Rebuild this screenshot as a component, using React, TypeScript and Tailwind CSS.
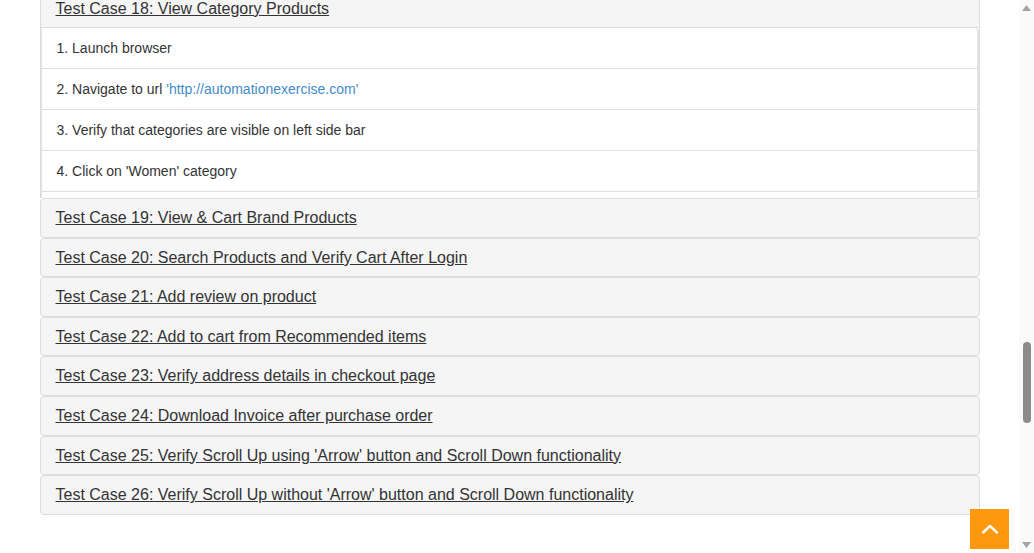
import React from 'react';

const steps = [
  { n: 1, text: 'Launch browser' },
  { n: 2, text: 'Navigate to url ', link: "'http://automationexercise.com'" },
  { n: 3, text: 'Verify that categories are visible on left side bar' },
  { n: 4, text: "Click on 'Women' category" },
];

const cases = [
  'Test Case 19: View & Cart Brand Products',
  'Test Case 20: Search Products and Verify Cart After Login',
  'Test Case 21: Add review on product',
  'Test Case 22: Add to cart from Recommended items',
  'Test Case 23: Verify address details in checkout page',
  'Test Case 24: Download Invoice after purchase order',
  "Test Case 25: Verify Scroll Up using 'Arrow' button and Scroll Down functionality",
  "Test Case 26: Verify Scroll Up without 'Arrow' button and Scroll Down functionality",
];

function App() {
  return (
    <div className="flex h-[553px] w-[1034px] overflow-hidden bg-white font-['Liberation_Sans',Arial,sans-serif] text-[#333]">
      <div className="relative flex-1">
        <div className="mx-auto -mt-[11px] w-[940px]">
          <div className="rounded-t border-x border-t border-[#ddd]">
            <div className="h-[38px] border-b border-[#ddd] bg-[#f5f5f5] px-[15px] pt-[9px] text-[16px] leading-[20px]">
              <a className="underline">Test Case 18: View Category Products</a>
            </div>
            <div className="h-[170px] overflow-hidden rounded-tr border-r-2 border-l border-[#e3e3e3] bg-white">
              {steps.map((s) => (
                <div key={s.n} className="h-[41px] border-b border-[#ddd] px-[15px] pt-[10px] text-[14px] leading-[20px]">
                  {s.n}. {s.text}
                  {s.link && <span className="text-[#428bca]">{s.link}</span>}
                </div>
              ))}
            </div>
          </div>
          <div className="flex flex-col">
            {cases.map((c) => (
              <div
                key={c}
                className="h-[39.6px] rounded border border-[#ddd] bg-[#f5f5f5] px-[15px] pt-[9px] text-[16px] leading-[20px]"
              >
                <a className="underline">{c}</a>
              </div>
            ))}
          </div>
        </div>
        <a className="absolute left-[970px] top-[509px] flex h-[40px] w-[39px] items-center justify-center bg-[#FE980F]">
          <svg width="18" height="12" viewBox="0 0 18 12" fill="none">
            <path d="M2 9.5 L9 3 L16 9.5" stroke="white" strokeWidth="2.4" strokeLinecap="round" strokeLinejoin="round" />
          </svg>
        </a>
      </div>
      <div className="flex w-[15px] flex-col items-center bg-[#fafafa]">
        <svg className="mt-[5px]" width="9" height="6" viewBox="0 0 9 6">
          <path d="M4.5 0 L9 6 L0 6 Z" fill="#a3a3a3" />
        </svg>
        <div className="mt-[331px] h-[81px] w-[8px] rounded-full bg-[#8b8b8b]" />
        <div className="flex-1" />
        <svg className="mb-[5px]" width="9" height="6" viewBox="0 0 9 6">
          <path d="M0 0 L9 0 L4.5 6 Z" fill="#a3a3a3" />
        </svg>
      </div>
    </div>
  );
}

export default App;
